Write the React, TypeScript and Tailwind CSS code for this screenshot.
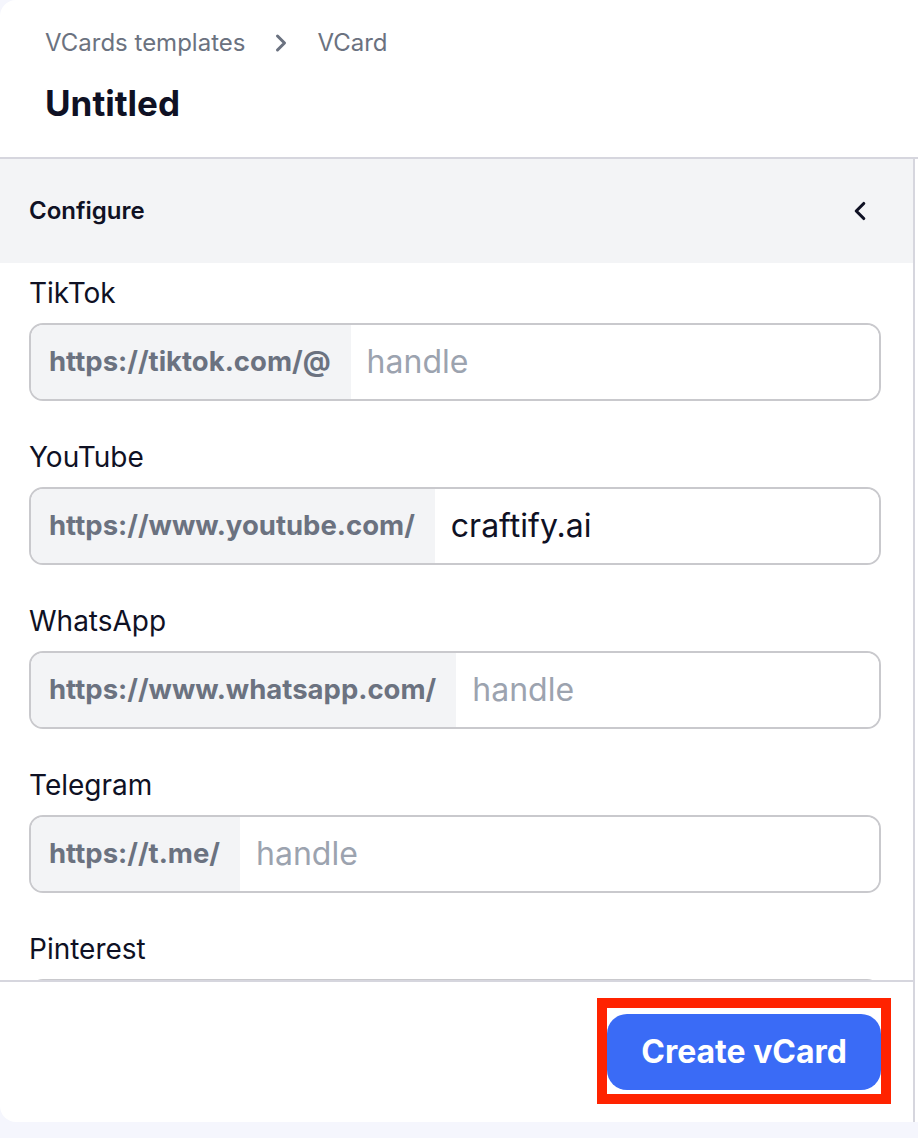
import React from "react";
import { ChevronLeft, ChevronRight } from "lucide-react";

const fields = [
  { label: "TikTok", prefix: "https://tiktok.com/@", value: "" },
  { label: "YouTube", prefix: "https://www.youtube.com/", value: "craftify.ai" },
  { label: "WhatsApp", prefix: "https://www.whatsapp.com/", value: "" },
  { label: "Telegram", prefix: "https://t.me/", value: "" },
  { label: "Pinterest", prefix: "https://pinterest.com/", value: "" },
];

const App: React.FC = () => {
  return (
    <div className="min-h-screen bg-[#f5f6fd] font-['Inter','Noto_Sans',sans-serif]">
      <div className="flex h-[1122px] flex-col overflow-hidden rounded-l-2xl bg-white">
        {/* header */}
        <div className="h-[159px] shrink-0 border-b-2 border-[#d6d6de] pl-[45px] pt-[27px]">
          <div className="flex h-8 items-center gap-[22px] text-[24px] text-[#6b7280]">
            <span>VCards templates</span>
            <ChevronRight size={28} strokeWidth={2.6} className="text-[#6b7280]" />
            <span>VCard</span>
          </div>
          <h1 className="mt-[22px] text-[35px] leading-[44px] font-bold text-[#0f1124]">Untitled</h1>
        </div>

        <div className="flex min-h-0 w-[915px] flex-1 flex-col border-r-2 border-[#d6d6de]">
          {/* configure bar */}
          <div className="flex h-[104px] shrink-0 items-center justify-between bg-[#f3f4f6] pl-[29px] pr-[38px]">
            <span className="text-[24px] font-semibold text-[#0f1124]">Configure</span>
            <ChevronLeft size={30} strokeWidth={2.5} className="text-[#0f1124]" />
          </div>

          {/* fields */}
          <div className="min-h-0 flex-1 overflow-hidden pt-[14px] pl-[29px] pr-[32px]">
            {fields.map((f) => (
              <div key={f.label} className="mb-[40px]">
                <label className="mb-[14px] block text-[28px] leading-8 text-[#0f1124]">{f.label}</label>
                <div className="flex h-[78px] overflow-hidden rounded-[14px] border-2 border-[#c9c9cd]">
                  <div className="flex shrink-0 items-center bg-[#f3f4f6] pl-[18px] pr-[20px] text-[27.5px] font-bold text-[#6b7280]">
                    {f.prefix}
                  </div>
                  <input
                    readOnly
                    value={f.value}
                    placeholder="handle"
                    className="min-w-0 flex-1 bg-white pl-4 text-[32px] text-[#0f1124] outline-none placeholder:text-[#9ca3af]"
                  />
                </div>
              </div>
            ))}
          </div>

          {/* footer */}
          <div className="flex h-[142px] shrink-0 items-center justify-end border-t-2 border-[#d6d6de] pr-[32px]">
            <div className="relative">
              <button className="h-[76px] rounded-[20px] bg-[#3a6bf6] px-[34px] text-[32px] font-bold text-white">
                Create vCard
              </button>
              <div className="pointer-events-none absolute top-[-16px] right-[-10px] bottom-[-14px] left-[-10px] border-[10px] border-[#ff2300]" />
            </div>
          </div>
        </div>
      </div>
    </div>
  );
};

export default App;
